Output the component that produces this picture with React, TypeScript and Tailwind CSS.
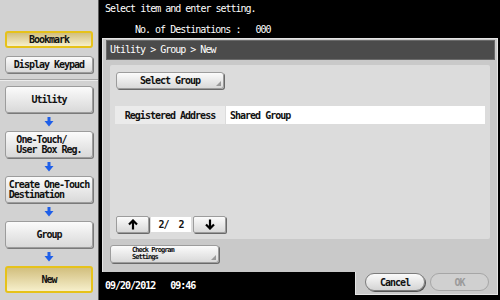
import type { ReactNode } from "react";

const mono = "font-['DejaVu_Sans_Mono','Liberation_Mono',monospace] tracking-[-1px]";

const FlowArrow = () => (
  <div className="h-[18px] flex items-center justify-center">
    <svg width="10" height="10" viewBox="0 0 10 10">
      <rect x="3.5" y="0" width="3" height="4" fill="#1f5fe8" />
      <path d="M0.5 4 L9.5 4 L5 9.5 Z" fill="#1f5fe8" />
    </svg>
  </div>
);

const SideButton = ({ children, active, className = "" }: { children: ReactNode; active?: boolean; className?: string }) => (
  <div
    className={`mx-[5px] w-[88px] flex items-center justify-center rounded-[3px] text-[10px] leading-[10px] font-bold text-[#111] ${
      active
        ? "border-2 border-[#e6c21a] bg-linear-to-b from-[#d2bf7e] to-[#f6efcb]"
        : "border border-[#9c9c9c] bg-linear-to-b from-[#fbfbfb] to-[#d9d9d9] shadow-[1px_1px_0_#7a7a7a]"
    } ${className}`}
  >
    <span className="inline-block text-left">{children}</span>
  </div>
);

const Corner = () => (
  <svg className="absolute right-[2px] bottom-[2px]" width="5" height="5" viewBox="0 0 5 5">
    <path d="M5 0 L5 5 L0 5 Z" fill="#9a9a9a" />
  </svg>
);

const ArrowBtn = ({ up }: { up?: boolean }) => (
  <div className="w-[33px] h-[17px] flex items-center justify-center rounded-[2px] border border-[#9c9c9c] bg-linear-to-b from-[#fbfbfb] to-[#d9d9d9] shadow-[1px_1px_0_#6a6a6a]">
    <svg width="10" height="11" viewBox="0 0 10 11">
      {up ? (
        <path d="M5 10.5 L5 1.5 M1 5.5 L5 1.5 L9 5.5" stroke="#000" strokeWidth="2.2" fill="none" />
      ) : (
        <path d="M5 0.5 L5 9.5 M1 5.5 L5 9.5 L9 5.5" stroke="#000" strokeWidth="2.2" fill="none" />
      )}
    </svg>
  </div>
);

export default function App() {
  return (
    <div className={`w-[500px] h-[300px] flex overflow-hidden bg-black ${mono}`}>
      {/* left flow sidebar */}
      <div className="w-[99px] h-full bg-[#d2d2d2] border-r border-[#5c5c5c] flex flex-col">
        <div className="pt-[31px] pb-[6px] border-b border-[#a4a4a4] flex flex-col gap-[8px]">
          <SideButton active className="h-[17px]">Bookmark</SideButton>
          <SideButton className="h-[17px]">Display Keypad</SideButton>
        </div>
        <div className="border-t border-[#ececec] pt-[5px] flex flex-col">
          <SideButton className="h-[27px]">Utility</SideButton>
          <FlowArrow />
          <SideButton className="h-[27px]">
            One-Touch/
            <br />
            User Box Reg.
          </SideButton>
          <FlowArrow />
          <SideButton className="h-[27px]">
            Create One-Touch
            <br />
            Destination
          </SideButton>
          <FlowArrow />
          <SideButton className="h-[27px]">Group</SideButton>
          <FlowArrow />
          <SideButton active className="h-[27px]">New</SideButton>
        </div>
      </div>

      {/* main */}
      <div className="flex-1 flex flex-col pl-[3px] pr-[2px]">
        <div className="h-[38px] text-white text-[10px] leading-[10px]">
          <div className="pt-[4px] pl-[3px]">Select item and enter setting.</div>
          <div className="pt-[11px] pl-[33px] flex">
            <span>No. of Destinations :</span>
            <span className="ml-[15px]">000</span>
          </div>
        </div>

        <div className="h-[234px] bg-[#c9c9c9] border-t border-x border-[#e4e4e4] flex flex-col">
          <div className="ml-[3px] mr-[2px] mt-[1px] h-[20px] bg-[#4b4b4b] border border-[#6a6a6a] text-white text-[10px] leading-[10px] flex items-center pl-[3px]">
            Utility &gt; Group &gt; New
          </div>

          <div className="mx-[7px] mt-[5px] h-[174px] bg-[#dcdcdc] rounded-[2px] flex flex-col px-[5px] pt-[7px] pb-[6px]">
            <div className="relative ml-[1px] w-[108px] h-[17px] rounded-[3px] border border-[#9c9c9c] bg-linear-to-b from-[#fbfbfb] to-[#d9d9d9] shadow-[1px_1px_0_#6a6a6a] flex items-center justify-center text-[10px] font-bold text-[#111]">
              Select Group
              <Corner />
            </div>

            <div className="mt-[17px] h-[18px] flex text-[10px] font-bold text-[#111]">
              <div className="w-[110px] bg-[#ebebeb] flex items-center justify-center">Registered Address</div>
              <div className="flex-1 ml-[1px] bg-white flex items-center pl-[4px]">Shared Group</div>
            </div>

            <div className="mt-auto ml-[1px] flex items-center gap-[1px]">
              <ArrowBtn up />
              <div className="w-[40px] h-[15px] bg-white flex items-center justify-center text-[10px] font-bold text-[#111] ml-[1px] mr-[1px] whitespace-pre">
                {"2/  2"}
              </div>
              <ArrowBtn />
            </div>
          </div>

          <div className="relative ml-[7px] mt-[6px] w-[109px] h-[18px] rounded-[3px] border border-[#9c9c9c] bg-linear-to-b from-[#fbfbfb] to-[#d9d9d9] shadow-[1px_1px_0_#6a6a6a] flex items-center pl-[21px] text-[7px] leading-[7px] font-bold text-[#111]">
            <span>
              Check Program
              <br />
              Settings
            </span>
            <Corner />
          </div>
        </div>

        <div className="flex-1 flex">
          <div className="flex-1 flex items-center pl-[3px] pb-[2px] text-white text-[10px] font-bold">
            <span>09/20/2012</span>
            <span className="ml-[15px]">09:46</span>
          </div>
          <div className="w-[143px] h-[23px] bg-[#c9c9c9] border-x border-b border-[#e4e4e4] flex pt-[1px] pl-[9px] gap-[5px]">
            <div className="w-[60px] h-[18px] rounded-full border border-[#7c7c7c] bg-linear-to-b from-[#fbfbfb] to-[#d4d4d4] shadow-[1px_1px_0_#555] flex items-center justify-center text-[10px] font-bold text-[#111]">
              Cancel
            </div>
            <div className="w-[59px] h-[18px] rounded-full border border-[#a6a6a6] bg-[#d0d0d0] flex items-center justify-center text-[10px] font-bold text-[#9a9a9a]">
              OK
            </div>
          </div>
        </div>
      </div>
    </div>
  );
}
